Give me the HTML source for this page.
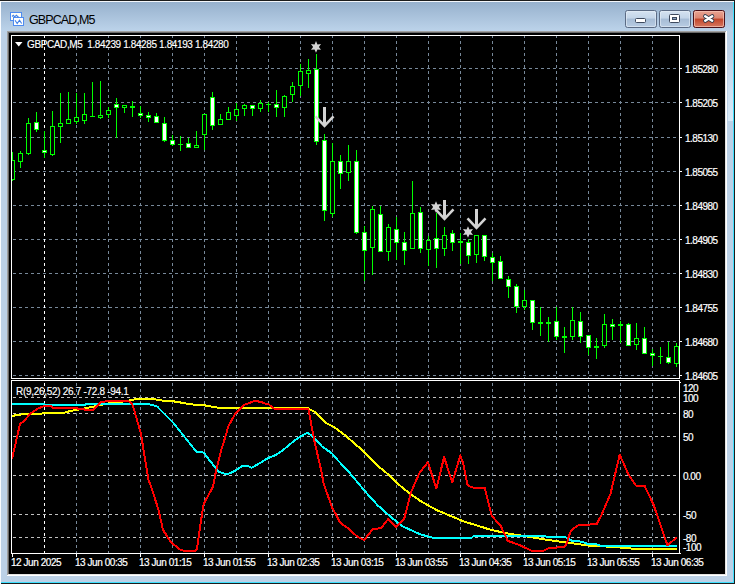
<!DOCTYPE html>
<html><head><meta charset="utf-8">
<style>
html,body{margin:0;padding:0;background:#fff;}
body{width:737px;height:584px;position:relative;overflow:hidden;font-family:"Liberation Sans",sans-serif;}
#win{position:absolute;left:0;top:0;width:737px;height:584px;}
.pl{position:absolute;left:685px;-webkit-text-stroke:0.2px #fff;font-size:10px;line-height:16px;color:#fff;letter-spacing:-0.5px;white-space:nowrap;}
.il{position:absolute;left:683px;-webkit-text-stroke:0.2px #fff;font-size:10px;line-height:16px;color:#fff;letter-spacing:-0.5px;white-space:nowrap;}
.tl{position:absolute;top:555px;-webkit-text-stroke:0.2px #fff;font-size:10px;line-height:16px;color:#fff;letter-spacing:-0.45px;white-space:nowrap;}
#title{position:absolute;left:29px;top:13px;font-size:12.5px;line-height:15px;color:#000;white-space:nowrap;letter-spacing:-0.9px;}
#hdr{position:absolute;left:27px;top:37px;-webkit-text-stroke:0.15px #fff;font-size:10px;line-height:16px;color:#fff;white-space:nowrap;letter-spacing:-0.38px;}
#ihdr{position:absolute;left:16px;top:384px;-webkit-text-stroke:0.15px #fff;font-size:10px;line-height:16px;color:#fff;white-space:nowrap;letter-spacing:-0.3px;}
</style></head><body>
<svg id="win" width="737" height="584" viewBox="0 0 737 584" shape-rendering="crispEdges">
<defs>
<linearGradient id="cap" x1="0" y1="0" x2="0" y2="1">
<stop offset="0" stop-color="#97b1cd"/><stop offset="1" stop-color="#bcd3ea"/>
</linearGradient>
<linearGradient id="btn" x1="0" y1="0" x2="0" y2="1">
<stop offset="0" stop-color="#d6e3f1"/><stop offset="0.45" stop-color="#c3d5e8"/><stop offset="0.5" stop-color="#a6bcd5"/><stop offset="1" stop-color="#b9cde3"/>
</linearGradient>
<linearGradient id="cls" x1="0" y1="0" x2="0" y2="1">
<stop offset="0" stop-color="#e9a594"/><stop offset="0.45" stop-color="#dc8672"/><stop offset="0.5" stop-color="#c2452a"/><stop offset="1" stop-color="#d77b64"/>
</linearGradient>
</defs>
<!-- frame -->
<rect x="0" y="0" width="735" height="584" fill="#1c1c1c"/>
<rect x="0" y="1" width="734" height="582" fill="#f4f7fb"/>
<rect x="1" y="2" width="733" height="581" fill="#3ee0ff"/>
<rect x="1" y="2" width="732" height="580" fill="#bcd1e7"/>
<rect x="1" y="2" width="732" height="29" fill="url(#cap)"/>
<rect x="0" y="1" width="1" height="583" fill="#fafcff"/>
<defs><linearGradient id="glass" x1="0" y1="0" x2="0" y2="1"><stop offset="0" stop-color="#bcd1e7"/><stop offset="0.6" stop-color="#cfe2f3"/><stop offset="1" stop-color="#d8eaf8"/></linearGradient></defs>
<rect x="728" y="50" width="5" height="71" fill="url(#glass)"/>
<!-- client edge -->
<rect x="7" y="31" width="719" height="1" fill="#a0a0a0"/>
<rect x="7" y="31" width="1" height="544" fill="#a0a0a0"/>
<rect x="8" y="32" width="717" height="1" fill="#696969"/>
<rect x="8" y="32" width="1" height="542" fill="#696969"/>
<rect x="726" y="31" width="1" height="545" fill="#ffffff"/>
<rect x="7" y="575" width="720" height="1" fill="#ffffff"/>
<rect x="725" y="32" width="1" height="543" fill="#e3e3e3"/>
<rect x="8" y="574" width="718" height="1" fill="#e3e3e3"/>
<rect x="9" y="33" width="716" height="541" fill="#000000"/>
<!-- chart frames -->
<rect x="11.5" y="35.5" width="668" height="343" fill="none" stroke="#fff" stroke-width="1"/>
<rect x="11.5" y="380.5" width="668" height="173" fill="none" stroke="#fff" stroke-width="1"/>
<svg x="12" y="36" width="667" height="342" viewBox="12 36 667 342" overflow="hidden">
<g id="mainclip">
<line x1="13" y1="68.5" x2="679" y2="68.5" stroke="#778899" stroke-width="1" stroke-dasharray="3 3"/>
<line x1="13" y1="102.5" x2="679" y2="102.5" stroke="#778899" stroke-width="1" stroke-dasharray="3 3"/>
<line x1="13" y1="137.5" x2="679" y2="137.5" stroke="#778899" stroke-width="1" stroke-dasharray="3 3"/>
<line x1="13" y1="171.5" x2="679" y2="171.5" stroke="#778899" stroke-width="1" stroke-dasharray="3 3"/>
<line x1="13" y1="205.5" x2="679" y2="205.5" stroke="#778899" stroke-width="1" stroke-dasharray="3 3"/>
<line x1="13" y1="239.5" x2="679" y2="239.5" stroke="#778899" stroke-width="1" stroke-dasharray="3 3"/>
<line x1="13" y1="273.5" x2="679" y2="273.5" stroke="#778899" stroke-width="1" stroke-dasharray="3 3"/>
<line x1="13" y1="307.5" x2="679" y2="307.5" stroke="#778899" stroke-width="1" stroke-dasharray="3 3"/>
<line x1="13" y1="341.5" x2="679" y2="341.5" stroke="#778899" stroke-width="1" stroke-dasharray="3 3"/>
<line x1="13" y1="375.5" x2="679" y2="375.5" stroke="#778899" stroke-width="1" stroke-dasharray="3 3"/>
<line x1="44.5" y1="35" x2="44.5" y2="378" stroke="#ffffff" stroke-width="1" stroke-dasharray="3 3"/>
<line x1="76.5" y1="35" x2="76.5" y2="378" stroke="#778899" stroke-width="1" stroke-dasharray="3 3"/>
<line x1="108.5" y1="35" x2="108.5" y2="378" stroke="#778899" stroke-width="1" stroke-dasharray="3 3"/>
<line x1="140.5" y1="35" x2="140.5" y2="378" stroke="#778899" stroke-width="1" stroke-dasharray="3 3"/>
<line x1="172.5" y1="35" x2="172.5" y2="378" stroke="#778899" stroke-width="1" stroke-dasharray="3 3"/>
<line x1="204.5" y1="35" x2="204.5" y2="378" stroke="#778899" stroke-width="1" stroke-dasharray="3 3"/>
<line x1="236.5" y1="35" x2="236.5" y2="378" stroke="#778899" stroke-width="1" stroke-dasharray="3 3"/>
<line x1="268.5" y1="35" x2="268.5" y2="378" stroke="#778899" stroke-width="1" stroke-dasharray="3 3"/>
<line x1="300.5" y1="35" x2="300.5" y2="378" stroke="#778899" stroke-width="1" stroke-dasharray="3 3"/>
<line x1="332.5" y1="35" x2="332.5" y2="378" stroke="#778899" stroke-width="1" stroke-dasharray="3 3"/>
<line x1="364.5" y1="35" x2="364.5" y2="378" stroke="#778899" stroke-width="1" stroke-dasharray="3 3"/>
<line x1="396.5" y1="35" x2="396.5" y2="378" stroke="#778899" stroke-width="1" stroke-dasharray="3 3"/>
<line x1="428.5" y1="35" x2="428.5" y2="378" stroke="#778899" stroke-width="1" stroke-dasharray="3 3"/>
<line x1="460.5" y1="35" x2="460.5" y2="378" stroke="#778899" stroke-width="1" stroke-dasharray="3 3"/>
<line x1="492.5" y1="35" x2="492.5" y2="378" stroke="#778899" stroke-width="1" stroke-dasharray="3 3"/>
<line x1="524.5" y1="35" x2="524.5" y2="378" stroke="#778899" stroke-width="1" stroke-dasharray="3 3"/>
<line x1="556.5" y1="35" x2="556.5" y2="378" stroke="#778899" stroke-width="1" stroke-dasharray="3 3"/>
<line x1="588.5" y1="35" x2="588.5" y2="378" stroke="#778899" stroke-width="1" stroke-dasharray="3 3"/>
<line x1="620.5" y1="35" x2="620.5" y2="378" stroke="#778899" stroke-width="1" stroke-dasharray="3 3"/>
<line x1="652.5" y1="35" x2="652.5" y2="378" stroke="#778899" stroke-width="1" stroke-dasharray="3 3"/>
<rect x="12" y="152" width="1" height="29" fill="#00ff00"/>
<rect x="10" y="160" width="5" height="20" fill="#00ff00"/>
<rect x="11" y="161" width="3" height="18" fill="#000"/>
<rect x="20" y="151" width="1" height="17" fill="#00ff00"/>
<rect x="18" y="153" width="5" height="9" fill="#00ff00"/>
<rect x="19" y="154" width="3" height="7" fill="#000"/>
<rect x="28" y="118" width="1" height="37" fill="#00ff00"/>
<rect x="26" y="123" width="5" height="31" fill="#00ff00"/>
<rect x="27" y="124" width="3" height="29" fill="#000"/>
<rect x="36" y="112" width="1" height="20" fill="#00ff00"/>
<rect x="34" y="122" width="5" height="8" fill="#00ff00"/>
<rect x="35" y="123" width="3" height="6" fill="#fff"/>
<rect x="44" y="131" width="1" height="27" fill="#00ff00"/>
<rect x="42" y="150" width="5" height="3" fill="#00ff00"/>
<rect x="43" y="151" width="3" height="1" fill="#fff"/>
<rect x="52" y="111" width="1" height="45" fill="#00ff00"/>
<rect x="50" y="126" width="5" height="29" fill="#00ff00"/>
<rect x="51" y="127" width="3" height="27" fill="#000"/>
<rect x="60" y="93" width="1" height="50" fill="#00ff00"/>
<rect x="58" y="123" width="5" height="4" fill="#00ff00"/>
<rect x="59" y="124" width="3" height="2" fill="#000"/>
<rect x="68" y="92" width="1" height="32" fill="#00ff00"/>
<rect x="66" y="119" width="5" height="5" fill="#00ff00"/>
<rect x="67" y="120" width="3" height="3" fill="#000"/>
<rect x="76" y="93" width="1" height="31" fill="#00ff00"/>
<rect x="74" y="117" width="5" height="5" fill="#00ff00"/>
<rect x="75" y="118" width="3" height="3" fill="#000"/>
<rect x="84" y="93" width="1" height="31" fill="#00ff00"/>
<rect x="82" y="114" width="5" height="7" fill="#00ff00"/>
<rect x="83" y="115" width="3" height="5" fill="#000"/>
<rect x="92" y="82" width="1" height="35" fill="#00ff00"/>
<rect x="90" y="116" width="5" height="1" fill="#00ff00"/>
<rect x="100" y="81" width="1" height="38" fill="#00ff00"/>
<rect x="98" y="115" width="5" height="3" fill="#00ff00"/>
<rect x="99" y="116" width="3" height="1" fill="#000"/>
<rect x="108" y="107" width="1" height="11" fill="#00ff00"/>
<rect x="106" y="110" width="5" height="5" fill="#00ff00"/>
<rect x="107" y="111" width="3" height="3" fill="#000"/>
<rect x="116" y="98" width="1" height="40" fill="#00ff00"/>
<rect x="114" y="104" width="5" height="4" fill="#00ff00"/>
<rect x="115" y="105" width="3" height="2" fill="#fff"/>
<rect x="124" y="105" width="1" height="8" fill="#00ff00"/>
<rect x="122" y="105" width="5" height="3" fill="#00ff00"/>
<rect x="123" y="106" width="3" height="1" fill="#000"/>
<rect x="132" y="101" width="1" height="16" fill="#00ff00"/>
<rect x="130" y="106" width="5" height="2" fill="#00ff00"/>
<rect x="140" y="106" width="1" height="12" fill="#00ff00"/>
<rect x="138" y="113" width="5" height="3" fill="#00ff00"/>
<rect x="139" y="114" width="3" height="1" fill="#fff"/>
<rect x="148" y="112" width="1" height="10" fill="#00ff00"/>
<rect x="146" y="115" width="5" height="3" fill="#00ff00"/>
<rect x="147" y="116" width="3" height="1" fill="#fff"/>
<rect x="156" y="113" width="1" height="10" fill="#00ff00"/>
<rect x="154" y="116" width="5" height="7" fill="#00ff00"/>
<rect x="155" y="117" width="3" height="5" fill="#fff"/>
<rect x="164" y="117" width="1" height="25" fill="#00ff00"/>
<rect x="162" y="123" width="5" height="18" fill="#00ff00"/>
<rect x="163" y="124" width="3" height="16" fill="#fff"/>
<rect x="172" y="135" width="1" height="11" fill="#00ff00"/>
<rect x="170" y="140" width="5" height="5" fill="#00ff00"/>
<rect x="171" y="141" width="3" height="3" fill="#fff"/>
<rect x="180" y="136" width="1" height="15" fill="#00ff00"/>
<rect x="178" y="144" width="5" height="1" fill="#00ff00"/>
<rect x="188" y="138" width="1" height="10" fill="#00ff00"/>
<rect x="186" y="143" width="5" height="5" fill="#00ff00"/>
<rect x="187" y="144" width="3" height="3" fill="#fff"/>
<rect x="196" y="131" width="1" height="17" fill="#00ff00"/>
<rect x="194" y="145" width="5" height="3" fill="#00ff00"/>
<rect x="195" y="146" width="3" height="1" fill="#000"/>
<rect x="204" y="114" width="1" height="36" fill="#00ff00"/>
<rect x="202" y="114" width="5" height="21" fill="#00ff00"/>
<rect x="203" y="115" width="3" height="19" fill="#000"/>
<rect x="212" y="92" width="1" height="38" fill="#00ff00"/>
<rect x="210" y="97" width="5" height="29" fill="#00ff00"/>
<rect x="211" y="98" width="3" height="27" fill="#fff"/>
<rect x="220" y="114" width="1" height="11" fill="#00ff00"/>
<rect x="218" y="119" width="5" height="6" fill="#00ff00"/>
<rect x="219" y="120" width="3" height="4" fill="#000"/>
<rect x="228" y="107" width="1" height="13" fill="#00ff00"/>
<rect x="226" y="112" width="5" height="8" fill="#00ff00"/>
<rect x="227" y="113" width="3" height="6" fill="#000"/>
<rect x="236" y="103" width="1" height="18" fill="#00ff00"/>
<rect x="234" y="109" width="5" height="7" fill="#00ff00"/>
<rect x="235" y="110" width="3" height="5" fill="#000"/>
<rect x="244" y="104" width="1" height="12" fill="#00ff00"/>
<rect x="242" y="105" width="5" height="4" fill="#00ff00"/>
<rect x="243" y="106" width="3" height="2" fill="#000"/>
<rect x="252" y="105" width="1" height="11" fill="#00ff00"/>
<rect x="250" y="105" width="5" height="4" fill="#00ff00"/>
<rect x="251" y="106" width="3" height="2" fill="#fff"/>
<rect x="260" y="100" width="1" height="12" fill="#00ff00"/>
<rect x="258" y="103" width="5" height="6" fill="#00ff00"/>
<rect x="259" y="104" width="3" height="4" fill="#000"/>
<rect x="268" y="102" width="1" height="10" fill="#00ff00"/>
<rect x="266" y="104" width="5" height="1" fill="#00ff00"/>
<rect x="276" y="90" width="1" height="27" fill="#00ff00"/>
<rect x="274" y="104" width="5" height="4" fill="#00ff00"/>
<rect x="275" y="105" width="3" height="2" fill="#fff"/>
<rect x="284" y="95" width="1" height="22" fill="#00ff00"/>
<rect x="282" y="96" width="5" height="12" fill="#00ff00"/>
<rect x="283" y="97" width="3" height="10" fill="#000"/>
<rect x="292" y="82" width="1" height="20" fill="#00ff00"/>
<rect x="290" y="86" width="5" height="9" fill="#00ff00"/>
<rect x="291" y="87" width="3" height="7" fill="#000"/>
<rect x="300" y="64" width="1" height="32" fill="#00ff00"/>
<rect x="298" y="71" width="5" height="15" fill="#00ff00"/>
<rect x="299" y="72" width="3" height="13" fill="#000"/>
<rect x="308" y="59" width="1" height="29" fill="#00ff00"/>
<rect x="306" y="70" width="5" height="4" fill="#00ff00"/>
<rect x="307" y="71" width="3" height="2" fill="#000"/>
<rect x="316" y="54" width="1" height="91" fill="#00ff00"/>
<rect x="314" y="69" width="5" height="73" fill="#00ff00"/>
<rect x="315" y="70" width="3" height="71" fill="#fff"/>
<rect x="324" y="134" width="1" height="87" fill="#00ff00"/>
<rect x="322" y="140" width="5" height="71" fill="#00ff00"/>
<rect x="323" y="141" width="3" height="69" fill="#fff"/>
<rect x="332" y="143" width="1" height="74" fill="#00ff00"/>
<rect x="330" y="161" width="5" height="53" fill="#00ff00"/>
<rect x="331" y="162" width="3" height="51" fill="#000"/>
<rect x="340" y="155" width="1" height="34" fill="#00ff00"/>
<rect x="338" y="161" width="5" height="13" fill="#00ff00"/>
<rect x="339" y="162" width="3" height="11" fill="#fff"/>
<rect x="348" y="145" width="1" height="36" fill="#00ff00"/>
<rect x="346" y="161" width="5" height="12" fill="#00ff00"/>
<rect x="347" y="162" width="3" height="10" fill="#000"/>
<rect x="356" y="150" width="1" height="84" fill="#00ff00"/>
<rect x="354" y="161" width="5" height="72" fill="#00ff00"/>
<rect x="355" y="162" width="3" height="70" fill="#fff"/>
<rect x="364" y="226" width="1" height="55" fill="#00ff00"/>
<rect x="362" y="232" width="5" height="19" fill="#00ff00"/>
<rect x="363" y="233" width="3" height="17" fill="#fff"/>
<rect x="372" y="206" width="1" height="69" fill="#00ff00"/>
<rect x="370" y="209" width="5" height="39" fill="#00ff00"/>
<rect x="371" y="210" width="3" height="37" fill="#000"/>
<rect x="380" y="206" width="1" height="46" fill="#00ff00"/>
<rect x="378" y="214" width="5" height="38" fill="#00ff00"/>
<rect x="379" y="215" width="3" height="36" fill="#fff"/>
<rect x="388" y="224" width="1" height="37" fill="#00ff00"/>
<rect x="386" y="227" width="5" height="25" fill="#00ff00"/>
<rect x="387" y="228" width="3" height="23" fill="#000"/>
<rect x="396" y="217" width="1" height="43" fill="#00ff00"/>
<rect x="394" y="229" width="5" height="14" fill="#00ff00"/>
<rect x="395" y="230" width="3" height="12" fill="#fff"/>
<rect x="404" y="232" width="1" height="33" fill="#00ff00"/>
<rect x="402" y="242" width="5" height="9" fill="#00ff00"/>
<rect x="403" y="243" width="3" height="7" fill="#fff"/>
<rect x="412" y="181" width="1" height="68" fill="#00ff00"/>
<rect x="410" y="213" width="5" height="36" fill="#00ff00"/>
<rect x="411" y="214" width="3" height="34" fill="#000"/>
<rect x="420" y="207" width="1" height="46" fill="#00ff00"/>
<rect x="418" y="212" width="5" height="37" fill="#00ff00"/>
<rect x="419" y="213" width="3" height="35" fill="#fff"/>
<rect x="428" y="236" width="1" height="30" fill="#00ff00"/>
<rect x="426" y="240" width="5" height="10" fill="#00ff00"/>
<rect x="427" y="241" width="3" height="8" fill="#000"/>
<rect x="436" y="213" width="1" height="55" fill="#00ff00"/>
<rect x="434" y="238" width="5" height="11" fill="#00ff00"/>
<rect x="435" y="239" width="3" height="9" fill="#fff"/>
<rect x="444" y="227" width="1" height="29" fill="#00ff00"/>
<rect x="442" y="235" width="5" height="14" fill="#00ff00"/>
<rect x="443" y="236" width="3" height="12" fill="#000"/>
<rect x="452" y="230" width="1" height="21" fill="#00ff00"/>
<rect x="450" y="233" width="5" height="10" fill="#00ff00"/>
<rect x="451" y="234" width="3" height="8" fill="#fff"/>
<rect x="460" y="233" width="1" height="31" fill="#00ff00"/>
<rect x="458" y="241" width="5" height="2" fill="#00ff00"/>
<rect x="468" y="239" width="1" height="25" fill="#00ff00"/>
<rect x="466" y="242" width="5" height="14" fill="#00ff00"/>
<rect x="467" y="243" width="3" height="12" fill="#fff"/>
<rect x="476" y="235" width="1" height="28" fill="#00ff00"/>
<rect x="474" y="235" width="5" height="20" fill="#00ff00"/>
<rect x="475" y="236" width="3" height="18" fill="#000"/>
<rect x="484" y="235" width="1" height="26" fill="#00ff00"/>
<rect x="482" y="235" width="5" height="22" fill="#00ff00"/>
<rect x="483" y="236" width="3" height="20" fill="#fff"/>
<rect x="492" y="253" width="1" height="28" fill="#00ff00"/>
<rect x="490" y="257" width="5" height="6" fill="#00ff00"/>
<rect x="491" y="258" width="3" height="4" fill="#fff"/>
<rect x="500" y="256" width="1" height="23" fill="#00ff00"/>
<rect x="498" y="261" width="5" height="18" fill="#00ff00"/>
<rect x="499" y="262" width="3" height="16" fill="#fff"/>
<rect x="508" y="276" width="1" height="22" fill="#00ff00"/>
<rect x="506" y="279" width="5" height="8" fill="#00ff00"/>
<rect x="507" y="280" width="3" height="6" fill="#fff"/>
<rect x="516" y="284" width="1" height="29" fill="#00ff00"/>
<rect x="514" y="286" width="5" height="21" fill="#00ff00"/>
<rect x="515" y="287" width="3" height="19" fill="#fff"/>
<rect x="524" y="290" width="1" height="20" fill="#00ff00"/>
<rect x="522" y="300" width="5" height="7" fill="#00ff00"/>
<rect x="523" y="301" width="3" height="5" fill="#000"/>
<rect x="532" y="300" width="1" height="30" fill="#00ff00"/>
<rect x="530" y="300" width="5" height="23" fill="#00ff00"/>
<rect x="531" y="301" width="3" height="21" fill="#fff"/>
<rect x="540" y="307" width="1" height="29" fill="#00ff00"/>
<rect x="538" y="322" width="5" height="2" fill="#00ff00"/>
<rect x="548" y="317" width="1" height="25" fill="#00ff00"/>
<rect x="546" y="322" width="5" height="2" fill="#00ff00"/>
<rect x="556" y="307" width="1" height="33" fill="#00ff00"/>
<rect x="554" y="321" width="5" height="16" fill="#00ff00"/>
<rect x="555" y="322" width="3" height="14" fill="#fff"/>
<rect x="564" y="327" width="1" height="26" fill="#00ff00"/>
<rect x="562" y="336" width="5" height="2" fill="#00ff00"/>
<rect x="572" y="307" width="1" height="33" fill="#00ff00"/>
<rect x="570" y="320" width="5" height="17" fill="#00ff00"/>
<rect x="571" y="321" width="3" height="15" fill="#000"/>
<rect x="580" y="312" width="1" height="31" fill="#00ff00"/>
<rect x="578" y="321" width="5" height="16" fill="#00ff00"/>
<rect x="579" y="322" width="3" height="14" fill="#fff"/>
<rect x="588" y="335" width="1" height="20" fill="#00ff00"/>
<rect x="586" y="335" width="5" height="13" fill="#00ff00"/>
<rect x="587" y="336" width="3" height="11" fill="#fff"/>
<rect x="596" y="338" width="1" height="21" fill="#00ff00"/>
<rect x="594" y="346" width="5" height="2" fill="#00ff00"/>
<rect x="604" y="314" width="1" height="34" fill="#00ff00"/>
<rect x="602" y="324" width="5" height="22" fill="#00ff00"/>
<rect x="603" y="325" width="3" height="20" fill="#000"/>
<rect x="612" y="319" width="1" height="21" fill="#00ff00"/>
<rect x="610" y="324" width="5" height="3" fill="#00ff00"/>
<rect x="611" y="325" width="3" height="1" fill="#fff"/>
<rect x="620" y="321" width="1" height="22" fill="#00ff00"/>
<rect x="618" y="324" width="5" height="2" fill="#00ff00"/>
<rect x="628" y="323" width="1" height="23" fill="#00ff00"/>
<rect x="626" y="324" width="5" height="22" fill="#00ff00"/>
<rect x="627" y="325" width="3" height="20" fill="#fff"/>
<rect x="636" y="323" width="1" height="27" fill="#00ff00"/>
<rect x="634" y="338" width="5" height="7" fill="#00ff00"/>
<rect x="635" y="339" width="3" height="5" fill="#000"/>
<rect x="644" y="327" width="1" height="27" fill="#00ff00"/>
<rect x="642" y="338" width="5" height="16" fill="#00ff00"/>
<rect x="643" y="339" width="3" height="14" fill="#fff"/>
<rect x="652" y="349" width="1" height="17" fill="#00ff00"/>
<rect x="650" y="353" width="5" height="3" fill="#00ff00"/>
<rect x="651" y="354" width="3" height="1" fill="#fff"/>
<rect x="660" y="347" width="1" height="17" fill="#00ff00"/>
<rect x="658" y="356" width="5" height="1" fill="#00ff00"/>
<rect x="668" y="342" width="1" height="22" fill="#00ff00"/>
<rect x="666" y="357" width="5" height="6" fill="#00ff00"/>
<rect x="667" y="358" width="3" height="4" fill="#fff"/>
<rect x="676" y="343" width="1" height="24" fill="#00ff00"/>
<rect x="674" y="346" width="5" height="18" fill="#00ff00"/>
<rect x="675" y="347" width="3" height="16" fill="#000"/>
<g fill="none" stroke="#d3d3d3" stroke-width="3" stroke-linecap="butt" shape-rendering="geometricPrecision"><line x1="324.50" y1="107.00" x2="324.50" y2="125.90"/><polyline points="315.50,116.40 324.50,125.90 333.50,116.40" stroke-linejoin="miter" stroke-width="2.6"/></g>
<g fill="none" stroke="#d3d3d3" stroke-width="3" stroke-linecap="butt" shape-rendering="geometricPrecision"><line x1="444.50" y1="200.00" x2="444.50" y2="218.90"/><polyline points="435.50,209.40 444.50,218.90 453.50,209.40" stroke-linejoin="miter" stroke-width="2.6"/></g>
<g fill="none" stroke="#d3d3d3" stroke-width="3" stroke-linecap="butt" shape-rendering="geometricPrecision"><line x1="476.50" y1="209.00" x2="476.50" y2="227.90"/><polyline points="467.50,218.40 476.50,227.90 485.50,218.40" stroke-linejoin="miter" stroke-width="2.6"/></g>
<polygon points="316.00,41.10 317.45,44.39 321.02,44.00 318.90,46.90 321.02,49.80 317.45,49.41 316.00,52.70 314.55,49.41 310.98,49.80 313.10,46.90 310.98,44.00 314.55,44.39" fill="#d3d3d3" shape-rendering="geometricPrecision"/>
<polygon points="436.00,201.20 437.45,204.49 441.02,204.10 438.90,207.00 441.02,209.90 437.45,209.51 436.00,212.80 434.55,209.51 430.98,209.90 433.10,207.00 430.98,204.10 434.55,204.49" fill="#d3d3d3" shape-rendering="geometricPrecision"/>
<polygon points="468.00,226.20 469.45,229.49 473.02,229.10 470.90,232.00 473.02,234.90 469.45,234.51 468.00,237.80 466.55,234.51 462.98,234.90 465.10,232.00 462.98,229.10 466.55,229.49" fill="#d3d3d3" shape-rendering="geometricPrecision"/>
</g>
</svg>
<svg x="12" y="381" width="667" height="172" viewBox="12 381 667 172" overflow="hidden">
<line x1="13" y1="397.5" x2="679" y2="397.5" stroke="#c0c0c0" stroke-width="1" stroke-dasharray="3 3"/>
<line x1="13" y1="413.5" x2="679" y2="413.5" stroke="#c0c0c0" stroke-width="1" stroke-dasharray="3 3"/>
<line x1="13" y1="436.5" x2="679" y2="436.5" stroke="#c0c0c0" stroke-width="1" stroke-dasharray="3 3"/>
<line x1="13" y1="475.5" x2="679" y2="475.5" stroke="#c0c0c0" stroke-width="1" stroke-dasharray="3 3"/>
<line x1="13" y1="514.5" x2="679" y2="514.5" stroke="#c0c0c0" stroke-width="1" stroke-dasharray="3 3"/>
<line x1="13" y1="537.5" x2="679" y2="537.5" stroke="#c0c0c0" stroke-width="1" stroke-dasharray="3 3"/>
<line x1="44.5" y1="383" x2="44.5" y2="553" stroke="#ffffff" stroke-width="1" stroke-dasharray="3 3"/>
<line x1="76.5" y1="383" x2="76.5" y2="553" stroke="#778899" stroke-width="1" stroke-dasharray="3 3"/>
<line x1="108.5" y1="383" x2="108.5" y2="553" stroke="#778899" stroke-width="1" stroke-dasharray="3 3"/>
<line x1="140.5" y1="383" x2="140.5" y2="553" stroke="#778899" stroke-width="1" stroke-dasharray="3 3"/>
<line x1="172.5" y1="383" x2="172.5" y2="553" stroke="#778899" stroke-width="1" stroke-dasharray="3 3"/>
<line x1="204.5" y1="383" x2="204.5" y2="553" stroke="#778899" stroke-width="1" stroke-dasharray="3 3"/>
<line x1="236.5" y1="383" x2="236.5" y2="553" stroke="#778899" stroke-width="1" stroke-dasharray="3 3"/>
<line x1="268.5" y1="383" x2="268.5" y2="553" stroke="#778899" stroke-width="1" stroke-dasharray="3 3"/>
<line x1="300.5" y1="383" x2="300.5" y2="553" stroke="#778899" stroke-width="1" stroke-dasharray="3 3"/>
<line x1="332.5" y1="383" x2="332.5" y2="553" stroke="#778899" stroke-width="1" stroke-dasharray="3 3"/>
<line x1="364.5" y1="383" x2="364.5" y2="553" stroke="#778899" stroke-width="1" stroke-dasharray="3 3"/>
<line x1="396.5" y1="383" x2="396.5" y2="553" stroke="#778899" stroke-width="1" stroke-dasharray="3 3"/>
<line x1="428.5" y1="383" x2="428.5" y2="553" stroke="#778899" stroke-width="1" stroke-dasharray="3 3"/>
<line x1="460.5" y1="383" x2="460.5" y2="553" stroke="#778899" stroke-width="1" stroke-dasharray="3 3"/>
<line x1="492.5" y1="383" x2="492.5" y2="553" stroke="#778899" stroke-width="1" stroke-dasharray="3 3"/>
<line x1="524.5" y1="383" x2="524.5" y2="553" stroke="#778899" stroke-width="1" stroke-dasharray="3 3"/>
<line x1="556.5" y1="383" x2="556.5" y2="553" stroke="#778899" stroke-width="1" stroke-dasharray="3 3"/>
<line x1="588.5" y1="383" x2="588.5" y2="553" stroke="#778899" stroke-width="1" stroke-dasharray="3 3"/>
<line x1="620.5" y1="383" x2="620.5" y2="553" stroke="#778899" stroke-width="1" stroke-dasharray="3 3"/>
<line x1="652.5" y1="383" x2="652.5" y2="553" stroke="#778899" stroke-width="1" stroke-dasharray="3 3"/>
<polyline points="12.0,416.0 19.0,414.6 33.0,414.0 47.0,413.2 63.0,413.2 70.0,411.0 85.0,408.4 97.4,405.7 111.0,403.0 124.8,401.3 134.0,399.5 140.8,399.0 154.7,399.0 157.7,400.3 171.6,401.0 191.6,404.4 204.5,405.3 213.0,406.9 220.7,408.0 308.2,408.4 315.9,412.6 320.6,417.2 325.2,422.6 334.2,427.2 346.5,436.5 364.2,451.9 375.8,464.2 388.0,474.2 398.0,484.0 411.0,494.5 421.7,501.8 437.1,510.3 464.0,521.5 475.4,525.0 490.8,529.8 506.2,533.2 530.0,537.0 549.0,540.1 566.0,542.4 587.6,545.5 604.3,546.0 608.0,547.0 619.7,547.5 636.7,549.0 676.7,549.0" fill="none" stroke="#ffff00" stroke-width="2" stroke-linejoin="round" shape-rendering="crispEdges"/>
<polyline points="12.0,404.0 44.0,404.0 45.0,405.0 85.0,405.0 86.0,404.0 148.5,404.0 154.7,405.7 157.0,406.4 173.1,422.6 196.3,451.6 203.7,452.6 211.4,462.7 219.0,472.0 226.8,474.2 233.0,472.0 242.2,466.0 246.8,465.5 251.5,467.8 260.7,462.7 268.2,458.0 275.9,455.0 283.6,449.6 292.8,441.9 300.5,436.5 307.5,432.6 312.8,436.5 322.0,446.5 332.0,453.4 337.2,459.6 348.0,471.0 352.7,476.6 365.0,491.2 377.3,505.0 389.6,515.8 398.0,522.8 403.2,526.6 420.2,534.3 432.5,537.7 471.6,537.8 473.9,535.8 564.5,536.7 572.2,540.9 581.5,541.6 587.6,544.0 596.6,544.4 600.0,545.5 616.7,545.5 676.7,546.0" fill="none" stroke="#00ffff" stroke-width="2" stroke-linejoin="round" shape-rendering="crispEdges"/>
<polyline points="12.0,459.0 20.0,424.0 24.0,421.0 30.0,414.0 37.0,409.0 44.0,406.0 51.0,406.0 53.0,408.0 74.0,408.0 88.0,410.0 93.0,410.0 97.0,406.0 101.0,402.0 110.0,401.0 129.0,401.5 132.0,404.0 133.0,406.0 141.0,434.0 146.0,465.0 148.5,480.0 151.6,488.0 158.5,510.0 163.0,530.0 171.6,543.0 180.8,550.0 187.0,551.5 196.3,550.5 197.8,543.6 200.0,527.0 203.7,504.0 213.0,486.6 216.0,471.0 220.7,452.0 225.3,437.0 228.4,426.0 236.0,412.6 243.8,405.0 254.6,401.0 260.7,401.8 266.0,404.0 268.2,404.0 274.3,408.7 308.2,408.7 309.8,416.4 314.4,441.0 321.3,471.0 323.6,483.5 332.0,507.4 334.2,511.2 340.3,522.8 348.0,528.2 357.3,536.6 364.2,540.2 372.7,529.0 381.2,528.2 388.0,519.2 396.3,527.0 404.0,519.4 411.0,492.4 419.4,473.0 427.9,462.3 436.4,488.5 444.1,457.0 452.2,482.4 460.3,455.4 463.1,463.0 467.7,485.5 472.3,487.5 484.7,487.8 491.6,515.5 500.8,526.2 507.8,540.9 518.6,544.7 530.0,550.0 532.2,551.0 543.0,551.0 549.1,548.0 564.5,547.0 566.8,543.2 569.9,533.2 572.2,529.3 579.2,524.7 596.6,524.4 601.2,515.5 610.5,494.0 619.7,454.6 628.2,474.0 635.9,485.5 644.4,485.5 653.6,504.7 667.5,545.5 676.7,537.3" fill="none" stroke="#ff0000" stroke-width="2" stroke-linejoin="round" shape-rendering="crispEdges"/>
</svg>
<rect x="680" y="68" width="2" height="1" fill="#fff"/>
<rect x="680" y="102" width="2" height="1" fill="#fff"/>
<rect x="680" y="137" width="2" height="1" fill="#fff"/>
<rect x="680" y="171" width="2" height="1" fill="#fff"/>
<rect x="680" y="205" width="2" height="1" fill="#fff"/>
<rect x="680" y="239" width="2" height="1" fill="#fff"/>
<rect x="680" y="273" width="2" height="1" fill="#fff"/>
<rect x="680" y="307" width="2" height="1" fill="#fff"/>
<rect x="680" y="341" width="2" height="1" fill="#fff"/>
<rect x="680" y="375" width="2" height="1" fill="#fff"/>
<rect x="680" y="382" width="1" height="1" fill="#fff"/>
<rect x="680" y="553" width="1" height="1" fill="#fff"/>
<rect x="12" y="554" width="1" height="3" fill="#fff"/>
<rect x="76" y="554" width="1" height="3" fill="#fff"/>
<rect x="140" y="554" width="1" height="3" fill="#fff"/>
<rect x="204" y="554" width="1" height="3" fill="#fff"/>
<rect x="268" y="554" width="1" height="3" fill="#fff"/>
<rect x="332" y="554" width="1" height="3" fill="#fff"/>
<rect x="396" y="554" width="1" height="3" fill="#fff"/>
<rect x="460" y="554" width="1" height="3" fill="#fff"/>
<rect x="524" y="554" width="1" height="3" fill="#fff"/>
<rect x="588" y="554" width="1" height="3" fill="#fff"/>
<rect x="652" y="554" width="1" height="3" fill="#fff"/>
<!-- triangle -->
<polygon points="15,42 22.5,42 18.75,46.5" fill="#fff" shape-rendering="geometricPrecision"/>
<!-- icon -->
<g shape-rendering="crispEdges">
<rect x="10" y="12" width="12" height="9" fill="#4f8cf0"/>
<rect x="11" y="13" width="10" height="7" fill="#fffef6"/>
<rect x="13" y="17" width="11" height="9" fill="#4f8cf0"/>
<rect x="14" y="18" width="9" height="7" fill="#ffffff"/>
</g>
<g shape-rendering="geometricPrecision" fill="none" stroke="#3f7fe8" stroke-width="1.1">
<polyline points="12,16.5 13.3,15.3 14.6,16.8 16.6,15.2 17.8,16.8 19,17"/>
<polyline points="15,20.3 17.2,23.5 19.5,20.3 21.7,23.5"/>
</g>
<!-- buttons -->
<rect x="625.5" y="10.5" width="31" height="17" rx="2" fill="url(#btn)" stroke="#5b6b84" shape-rendering="geometricPrecision"/>
<rect x="626.5" y="11.5" width="29" height="15" rx="1.5" fill="none" stroke="#e6eef7" stroke-opacity="0.6" shape-rendering="geometricPrecision"/>
<rect x="635.5" y="18.5" width="10" height="4" rx="1" fill="#fff" stroke="#3e4a5e" shape-rendering="geometricPrecision"/>
<rect x="659.5" y="10.5" width="31" height="17" rx="2" fill="url(#btn)" stroke="#5b6b84" shape-rendering="geometricPrecision"/>
<rect x="660.5" y="11.5" width="29" height="15" rx="1.5" fill="none" stroke="#e6eef7" stroke-opacity="0.6" shape-rendering="geometricPrecision"/>
<rect x="669.5" y="14.5" width="10" height="8" rx="1" fill="#fff" stroke="#3e4a5e" shape-rendering="geometricPrecision"/>
<rect x="672.5" y="17.5" width="4" height="2" fill="#8aa2c0" stroke="#3e4a5e" shape-rendering="geometricPrecision"/>
<rect x="693.5" y="10.5" width="31" height="17" rx="2" fill="url(#cls)" stroke="#4a1119" shape-rendering="geometricPrecision"/>
<rect x="694.5" y="11.5" width="29" height="15" rx="1.5" fill="none" stroke="#f6c4b6" stroke-opacity="0.7" shape-rendering="geometricPrecision"/>
<g shape-rendering="geometricPrecision">
<path d="M705.2,16.3 L712.2,20.7 M712.2,16.3 L705.2,20.7" stroke="#2f3a4c" stroke-width="4.2" stroke-linecap="round"/>
<path d="M705.2,16.3 L712.2,20.7 M712.2,16.3 L705.2,20.7" stroke="#ffffff" stroke-width="2.5" stroke-linecap="round"/>
</g>
</svg>
<div id="title">GBPCAD,M5</div>
<div id="hdr">GBPCAD,M5&nbsp;&nbsp;1.84239 1.84285 1.84193 1.84280</div>
<div id="ihdr">R(9,26,52) 26.7 -72.8 -94.1</div>
<div class="pl" style="top:62px">1.85280</div>
<div class="pl" style="top:96px">1.85205</div>
<div class="pl" style="top:131px">1.85130</div>
<div class="pl" style="top:165px">1.85055</div>
<div class="pl" style="top:199px">1.84980</div>
<div class="pl" style="top:233px">1.84905</div>
<div class="pl" style="top:267px">1.84830</div>
<div class="pl" style="top:301px">1.84755</div>
<div class="pl" style="top:335px">1.84680</div>
<div class="pl" style="top:369px">1.84605</div>
<div class="il" style="top:381px">120</div>
<div class="il" style="top:391px">100</div>
<div class="il" style="top:407px">80</div>
<div class="il" style="top:430px">50</div>
<div class="il" style="top:469px">0.00</div>
<div class="il" style="top:508px">-50</div>
<div class="il" style="top:531px">-80</div>
<div class="il" style="top:540px">-100</div>
<div class="tl" style="left:11px">12 Jun 2025</div>
<div class="tl" style="left:75px">13 Jun 00:35</div>
<div class="tl" style="left:139px">13 Jun 01:15</div>
<div class="tl" style="left:203px">13 Jun 01:55</div>
<div class="tl" style="left:267px">13 Jun 02:35</div>
<div class="tl" style="left:331px">13 Jun 03:15</div>
<div class="tl" style="left:395px">13 Jun 03:55</div>
<div class="tl" style="left:459px">13 Jun 04:35</div>
<div class="tl" style="left:523px">13 Jun 05:15</div>
<div class="tl" style="left:587px">13 Jun 05:55</div>
<div class="tl" style="left:651px">13 Jun 06:35</div>
</body></html>
